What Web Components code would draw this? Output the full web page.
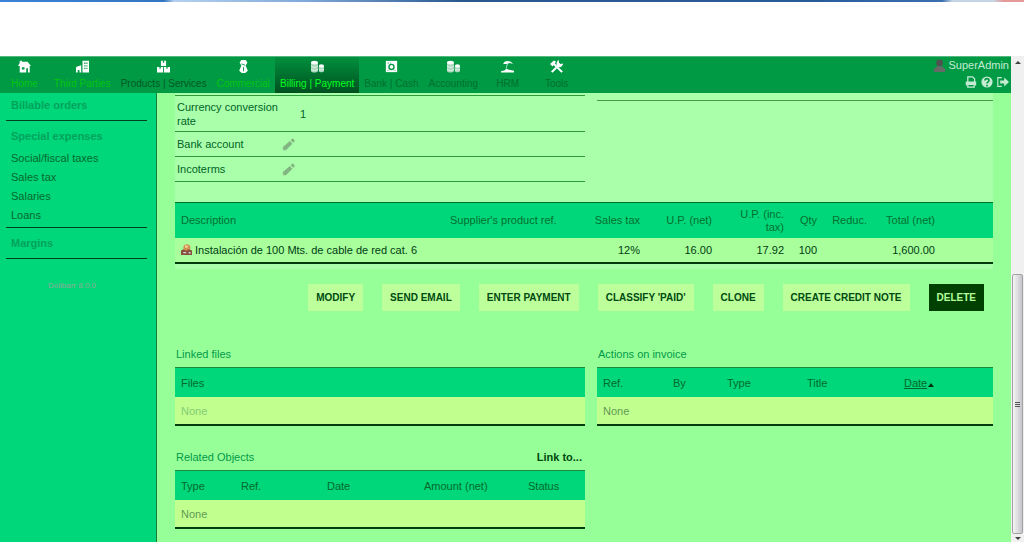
<!DOCTYPE html>
<html lang="en">
<head>
<meta charset="utf-8">
<title>Supplier invoice</title>
<style>
   html, body { margin: 0; height: 100%; }
   body {
      --header-bg: #009944;
      --side-bg: #00d67a;
      --page-bg: #97ff97;
      --card-bg: #aaffaa;
      --row-bg: #c1ff8e;
      --rule: #003c10;
      font: 11px/14px "Liberation Sans", Arial, sans-serif;
      color: #006428;
      background: #fff;
      overflow: hidden;
   }
</style>
</head>
<body>
<browser-window>
   <erp-header slot="header">
      <menu-entry icon="home" lit>Home</menu-entry>
      <menu-entry icon="building" lit>Third Parties</menu-entry>
      <menu-entry icon="boxes" dark>Products | Services</menu-entry>
      <menu-entry icon="tie" lit>Commercial</menu-entry>
      <menu-entry icon="coins" active>Billing | Payment</menu-entry>
      <menu-entry icon="safe">Bank | Cash</menu-entry>
      <menu-entry icon="coins">Accounting</menu-entry>
      <menu-entry icon="beach">HRM</menu-entry>
      <menu-entry icon="tools">Tools</menu-entry>
   </erp-header>

   <side-menu slot="side"></side-menu>

   <invoice-card></invoice-card>
   <action-bar>
      <action-button>MODIFY</action-button>
      <action-button>SEND EMAIL</action-button>
      <action-button>ENTER PAYMENT</action-button>
      <action-button>CLASSIFY 'PAID'</action-button>
      <action-button>CLONE</action-button>
      <action-button>CREATE CREDIT NOTE</action-button>
      <action-button danger>DELETE</action-button>
   </action-bar>
   <two-columns>
      <list-panel heading="Linked files" columns="Files" faded></list-panel>
      <list-panel slot="right" heading="Actions on invoice" columns="Ref.:70,By:54,Type:80,Title:97,Date" sorted="Date"></list-panel>
      <list-panel heading="Related Objects" columns="Type:60,Ref.:86,Date:97,Amount (net):104,Status">
         <a href="#link">Link to...</a>
      </list-panel>
   </two-columns>

   <scroll-track slot="scroll"></scroll-track>
</browser-window>

<script>
const ICONS = {
   home: '<path fill="#fff" d="M0 7 2 3.500V1h2.500v1H11l4 5h-1.500v7.500H2V7z"/><path fill="#094" d="M4.500 8.500h3v2.500h-3zM9.500 9.500h2V15h-2z"/>',
   building: '<path fill="#fff" d="M7.500 1H15v13.500H7.500zM0 8l6-2v8.500H4v-3H2v3H0z"/><path fill="#094" d="M9.500 3h1.500v1.500H9.500zM12 3h1.200v1.500H12zM9.500 6h1.500v1.500H9.500zM12 6h1.200v1.500H12zM9.500 9h1.500v1.500H9.500zM12 9h1.200v1.500H12z"/>',
   boxes: '<path fill="#fff" d="M4.500 1h6v6h-6zM0 8h7v6.500H0zM8 8h7v6.500H8z"/><path fill="#094" d="M6.800 1h1.500v2.200H6.800zM2.800 8h1.500v2.200H2.800zM10.800 8h1.500v2.200h-1.500z"/>',
   tie: '<path fill="#fff" d="M5 0h5l2 3-2 3.500 2.500 6L9.500 15h-4l-3-2.500L5 6.500 3 3z"/><path fill="none" stroke="#094" d="M5 4.500 9.500 6M7.500 8v5"/>',
   coins: '<path fill="#a9d8bd" d="M0 3v10c1 2 7 2 8 0V3zM9 7v6c1 1.500 5 1.500 6 0V7z"/><ellipse fill="#fff" cx="4" cy="3" rx="4" ry="2.200"/><ellipse fill="#fff" cx="12" cy="7" rx="3" ry="2"/><path fill="none" stroke="#fff" stroke-width=".8" d="M0 7c1 2 7 2 8 0M0 10.500c1 2 7 2 8 0M9 10.500c1 1.500 5 1.500 6 0"/>',
   safe: '<path fill="#fff" d="M1 1h13v13H1z"/><circle cx="7.500" cy="8" r="2.900" fill="none" stroke="#094" stroke-width="1.600"/><path stroke="#094" d="M3 3.500h1.500M6 3.500h1M3 12h1M11 12h1"/>',
   beach: '<path fill="#fff" d="M2.500 4.500C4 0 10 0 14 4.500L10 3.500 7 4.500zM0 13l4-1 2.500-2.500L8 11l7 1.500v2H0z"/><path stroke="#cfeadb" fill="none" d="M8 3 6 9"/>',
   tools: '<path stroke="#fff" stroke-width="2.400" fill="none" d="m4 4 10 10M11.500 4.500 2 14"/><path fill="#fff" d="m0 4.500 4.500-4 2.500 1.500-4 5.500zM10 0l.5 3.500 1.500 1L15 4c0 3-3 5-5.500 4L7.500 5.500C7.500 3 8 1 10 0z"/>',
   user: '<circle cx="7.500" cy="4.500" r="3.900" fill="#4e5350"/><path fill="#666a66" d="M1 15v-3.500L5 8.500h5l4 3V15z"/>',
   print: '<path fill="none" stroke="#c5ecd3" stroke-width="1.600" d="M3.500 8V1h6L12 3.500V8M3.500 10.500h8V14h-8z"/><path fill="#c5ecd3" d="M1 7h13v5h-2V10H3v2H1z"/>',
   help: '<circle cx="7.500" cy="7.500" r="7" fill="#c5ecd3"/><path fill="none" stroke="#094" stroke-width="2" d="M5 5.500c0-3 5-3 5 0 0 2-2.500 1.500-2.500 4M7.500 10.800V13"/>',
   logout: '<path fill="none" stroke="#c5ecd3" stroke-width="1.400" d="M6 2H1v11h5"/><path fill="#c5ecd3" d="M4 5.500h5V2l6 5.500L9 13V9.500H4z"/>',
   pencil: '<path fill="#82b582" d="M1 14v-3.500L9 3.500l3 3L4.500 14zM10 2.500 11.500 1H13l1.500 1.500V4L13 5.500z"/><path fill="#aaffaa" d="m2 12 1 1-1 .3z"/>',
   service: '<circle cx="8" cy="5" r="4.800" fill="#d08f4c"/><path fill="#f4d9a8" d="M5.500 2h3.500v3H5.500z"/><path fill="#84503f" d="M0 9l3-2 3 2h2l3-2 4 2v6H0z"/><path fill="#e3d5cf" d="M3 11h4v1.500H3zM10.500 11H13v2h-2.500z"/>'
};

class UiIcon extends HTMLElement {
   constructor() {
      super();
      this.attachShadow({ mode: "open" });
   }
   connectedCallback() {
      this.shadowRoot.innerHTML = `
         <style>
            :host { display: inline-block; inline-size: var(--icon-size, 13px); block-size: var(--icon-size, 13px); }
            svg { display: block; inline-size: 100%; block-size: 100%; }
         </style>
         <svg viewBox="0 0 15 15" aria-hidden="true">${ICONS[this.getAttribute("name")] || ""}</svg>`;
   }
}
customElements.define("ui-icon", UiIcon);

class BrowserWindow extends HTMLElement {
   constructor() {
      super();
      this.attachShadow({ mode: "open" }).innerHTML = `
         <style>
            :host { display: flex; flex-direction: column; block-size: 100vh; }
            .frame {
               flex: none;
               block-size: 2px;
               background: linear-gradient(90deg, #3b82d8, #3475c0 16%, #b4d0f0 17%, #7fa8d8 30%, #29588f 45%, #2a5c9c 80%, #3a70b0 92%, #c5d5e5 93%, #c5d5e5 97%, #e59a9a 98%);
            }
            .blank { flex: none; block-size: 54px; background: #fff; }
            .view { flex: 1; display: flex; min-block-size: 0; }
            .app { flex: 1; display: flex; flex-direction: column; min-inline-size: 0; }
            .body { flex: 1; display: flex; min-block-size: 0; background: var(--page-bg); }
            main { flex: 1; min-inline-size: 0; padding-inline: 18px; overflow: hidden; }
            .foot { flex: none; block-size: 10px; }
         </style>
         <div class="frame"></div>
         <div class="blank"></div>
         <div class="view">
            <div class="app">
               <slot name="header"></slot>
               <div class="body">
                  <slot name="side"></slot>
                  <main><slot></slot></main>
               </div>
            </div>
            <slot name="scroll"></slot>
         </div>
         <div class="foot"></div>`;
   }
}
customElements.define("browser-window", BrowserWindow);

class ErpHeader extends HTMLElement {
   constructor() {
      super();
      this.attachShadow({ mode: "open" }).innerHTML = `
         <style>
            :host {
               display: flex;
               flex: none;
               justify-content: space-between;
               box-sizing: border-box;
               block-size: 37px;
               background: var(--header-bg);
               border-block-start: 1px solid #55b97f;
            }
            nav { display: flex; }
            .login { padding: 1px 2px 0 0; color: #c5ecd3; }
            .login div { display: flex; justify-content: flex-end; align-items: center; gap: 2px; }
            .login .tools { gap: 4px; padding-block-start: 4px; --icon-size: 12px; }
            a { color: inherit; text-decoration: none; display: block; }
         </style>
         <nav><slot></slot></nav>
         <div class="login">
            <div><ui-icon name="user"></ui-icon><a href="#user">SuperAdmin</a></div>
            <div class="tools">
               <a href="#print" aria-label="Print"><ui-icon name="print"></ui-icon></a>
               <a href="#help" aria-label="Help"><ui-icon name="help"></ui-icon></a>
               <a href="#logout" aria-label="Logout"><ui-icon name="logout"></ui-icon></a>
            </div>
         </div>`;
   }
}
customElements.define("erp-header", ErpHeader);

class MenuEntry extends HTMLElement {
   constructor() {
      super();
      this.attachShadow({ mode: "open" });
   }
   connectedCallback() {
      this.shadowRoot.innerHTML = `
         <style>
            :host { display: block; color: #007030; }
            :host([lit]) { color: #00c80f; }
            :host([dark]) { color: #005a24; }
            :host([active]) { color: #00ff22; background: linear-gradient(#00903e, #00501f); }
            a {
               display: flex;
               flex-direction: column;
               align-items: center;
               gap: 4px;
               box-sizing: border-box;
               min-inline-size: 49px;
               block-size: 100%;
               padding: 3px 5px 0;
               color: inherit;
               font-size: 10px;
               line-height: 14px;
               white-space: nowrap;
               text-decoration: none;
            }
         </style>
         <a href="#menu"><ui-icon name="${this.getAttribute("icon")}"></ui-icon><span><slot></slot></span></a>`;
   }
}
customElements.define("menu-entry", MenuEntry);

class SideMenu extends HTMLElement {
   constructor() {
      super();
      this.attachShadow({ mode: "open" }).innerHTML = `
         <style>
            :host {
               display: block;
               flex: none;
               box-sizing: border-box;
               inline-size: 157px;
               padding-inline: 6px 9px;
               background: var(--side-bg);
               border-inline-end: 1px solid #1d7a3e;
            }
            section { padding: 8px 5px; border-block-end: 1px solid #004020; }
            section:first-of-type { padding-block-start: 5px; }
            section.list { padding-block-end: 2px; }
            a { display: block; color: #006a2c; line-height: 19px; text-decoration: none; }
            a.title { color: #00a35c; font-weight: bold; line-height: 14px; }
            .list .title { margin-block-end: 6px; }
            .version { margin-block-start: 20px; color: #8fae98; font-size: 8px; text-align: center; padding-inline-end: 9px; }
         </style>
         <section><a class="title" href="#orders">Billable orders</a></section>
         <section class="list">
            <a class="title" href="#expenses">Special expenses</a>
            <a href="#taxes">Social/fiscal taxes</a>
            <a href="#vat">Sales tax</a>
            <a href="#salaries">Salaries</a>
            <a href="#loans">Loans</a>
         </section>
         <section><a class="title" href="#margins">Margins</a></section>
         <div class="version">Dolibarr 8.0.0</div>`;
   }
}
customElements.define("side-menu", SideMenu);

class TwoColumns extends HTMLElement {
   constructor() {
      super();
      this.attachShadow({ mode: "open" }).innerHTML = `
         <style>
            :host { display: grid; grid-template-columns: 410fr 396fr; column-gap: 12px; }
            div { min-inline-size: 0; }
         </style>
         <div><slot></slot></div>
         <div><slot name="right"></slot></div>`;
   }
}
customElements.define("two-columns", TwoColumns);

class InvoiceCard extends HTMLElement {
   constructor() {
      super();
      this.attachShadow({ mode: "open" }).innerHTML = `
         <style>
            :host { display: block; background: var(--card-bg); padding-block: 2px 5px; }
            table { inline-size: 100%; border-collapse: separate; border-spacing: 0; table-layout: fixed; }
            td, th { box-sizing: border-box; font-weight: normal; text-align: start; }
            ui-icon { vertical-align: middle; }

            .fields { border-block-start: 1px solid #2f9a3c; }
            .fields td { padding: 0 2px; block-size: 25px; border-block-end: 1px solid #2f9a3c; }
            .fields tr:first-child td { block-size: 36px; }
            .fields td:first-child { inline-size: 105px; }
            .right { block-size: 5px; border-block-end: 1px solid #459c4b; }
            .value { padding-inline-start: 18px; }

            .lines { margin-block-start: 20px; border-block: 1px solid #00702c; border-block-end: 2px solid var(--rule); }
            .lines th { block-size: 35px; padding: 0 6px; line-height: 13px; background: var(--side-bg); color: #007030; }
            .lines td { block-size: 24px; padding: 0 6px; color: #003c14; background: #a9ff9b; white-space: nowrap; }
            .lines .num { text-align: end; }
            .lines ui-icon { --icon-size: 11px; vertical-align: -1px; }
         </style>
         <two-columns>
            <table class="fields">
               <tr><td>Currency conversion rate</td><td><span class="value">1</span></td></tr>
               <tr><td>Bank account</td><td><ui-icon name="pencil"></ui-icon></td></tr>
               <tr><td>Incoterms</td><td><ui-icon name="pencil"></ui-icon></td></tr>
            </table>
            <div class="right" slot="right"></div>
         </two-columns>
         <table class="lines">
            <colgroup>
               <col><col width="131"><col width="71"><col width="72"><col width="72">
               <col width="33"><col width="50"><col width="68"><col width="52">
            </colgroup>
            <tr>
               <th>Description</th><th>Supplier's product ref.</th><th class="num">Sales tax</th>
               <th class="num">U.P. (net)</th><th class="num">U.P. (inc. tax)</th><th class="num">Qty</th>
               <th class="num">Reduc.</th><th class="num">Total (net)</th><th></th>
            </tr>
            <tr>
               <td><ui-icon name="service"></ui-icon> Instalación de 100 Mts. de cable de red cat. 6</td>
               <td></td><td class="num">12%</td><td class="num">16.00</td><td class="num">17.92</td>
               <td class="num">100</td><td></td><td class="num">1,600.00</td><td></td>
            </tr>
         </table>`;
   }
}
customElements.define("invoice-card", InvoiceCard);

class ActionBar extends HTMLElement {
   constructor() {
      super();
      this.attachShadow({ mode: "open" }).innerHTML = `
         <style>
            :host { display: flex; justify-content: flex-end; gap: 19px; padding: 15px 9px 33px; }
         </style>
         <slot></slot>`;
   }
}
customElements.define("action-bar", ActionBar);

class ActionButton extends HTMLElement {
   constructor() {
      super();
      this.attachShadow({ mode: "open" }).innerHTML = `
         <style>
            :host { display: block; }
            button {
               display: block;
               block-size: 27px;
               padding: 0 8px;
               border: 0;
               background: #bdff9b;
               color: #004a10;
               font: bold 10px/14px "Liberation Sans", Arial, sans-serif;
               white-space: nowrap;
            }
            :host([danger]) button { background: #004000; color: #b5ff9b; }
         </style>
         <button type="button"><slot></slot></button>`;
   }
}
customElements.define("action-button", ActionButton);

class ListPanel extends HTMLElement {
   constructor() {
      super();
      this.attachShadow({ mode: "open" });
   }
   connectedCallback() {
      const sorted = this.getAttribute("sorted");
      const columns = this.getAttribute("columns").split(",").map((c) => c.split(":"));
      const cols = columns.map(([, width]) => width ? `<col width="${width}">` : "<col>").join("");
      const heads = columns.map(([name]) => name === sorted
         ? `<th><a href="#sort">${name}</a><i></i></th>`
         : `<th>${name}</th>`).join("");
      this.shadowRoot.innerHTML = `
         <style>
            :host { display: block; padding-block-end: 21px; }
            header { display: flex; align-items: center; justify-content: space-between; block-size: 20px; padding: 0 3px 3px 1px; }
            h2 { margin: 0; font-size: 11px; font-weight: normal; color: #00994a; }
            ::slotted(a) { color: #004a10; font-weight: bold; text-decoration: none; }
            table {
               inline-size: 100%;
               border-spacing: 0;
               table-layout: fixed;
               border-block: 1px solid #1c8a3c;
               border-block-end: 2px solid var(--rule);
            }
            th, td { box-sizing: border-box; padding: 0 6px; text-align: start; font-weight: normal; white-space: nowrap; }
            th { block-size: 29px; background: var(--side-bg); color: #006a2c; }
            td { block-size: 27px; background: var(--row-bg); color: #629a55; }
            :host([faded]) td { color: #84cc74; }
            th a { color: inherit; }
            i {
               display: inline-block;
               border: 3px solid transparent;
               border-block-start: 0;
               border-block-end: 4px solid #003010;
               margin-inline-start: 1px;
            }
         </style>
         <header><h2>${this.getAttribute("heading")}</h2><slot></slot></header>
         <table>
            <colgroup>${cols}</colgroup>
            <tr>${heads}</tr>
            <tr><td colspan="${columns.length}">None</td></tr>
         </table>`;
   }
}
customElements.define("list-panel", ListPanel);

class ScrollTrack extends HTMLElement {
   constructor() {
      super();
      this.attachShadow({ mode: "open" }).innerHTML = `
         <style>
            :host { display: flex; flex-direction: column; flex: none; inline-size: 13px; background: #f0f0f0; }
            .arrow { flex: none; display: flex; align-items: center; justify-content: center; block-size: 12px; }
            .arrow::after { content: ""; border: 3px solid transparent; border-block-start: 0; border-block-end: 3px solid #404040; }
            .down { block-size: 8px; }
            .down::after { transform: rotate(180deg); }
            .space { flex: 206; }
            .thumb {
               flex: 258;
               display: flex;
               flex-direction: column;
               align-items: center;
               justify-content: center;
               gap: 1px;
               margin-inline: 1px;
               border: 1px solid #a2a2a2;
               border-radius: 2px;
               background: linear-gradient(90deg, #f5f5f5, #dedee2 50%, #c4c4ca);
            }
            .thumb b { inline-size: 5px; block-size: 1px; background: #555; }
         </style>
         <div class="arrow"></div>
         <div class="space"></div>
         <div class="thumb"><b></b><b></b><b></b></div>
         <div class="arrow down"></div>`;
   }
}
customElements.define("scroll-track", ScrollTrack);
</script>
</body>
</html>
